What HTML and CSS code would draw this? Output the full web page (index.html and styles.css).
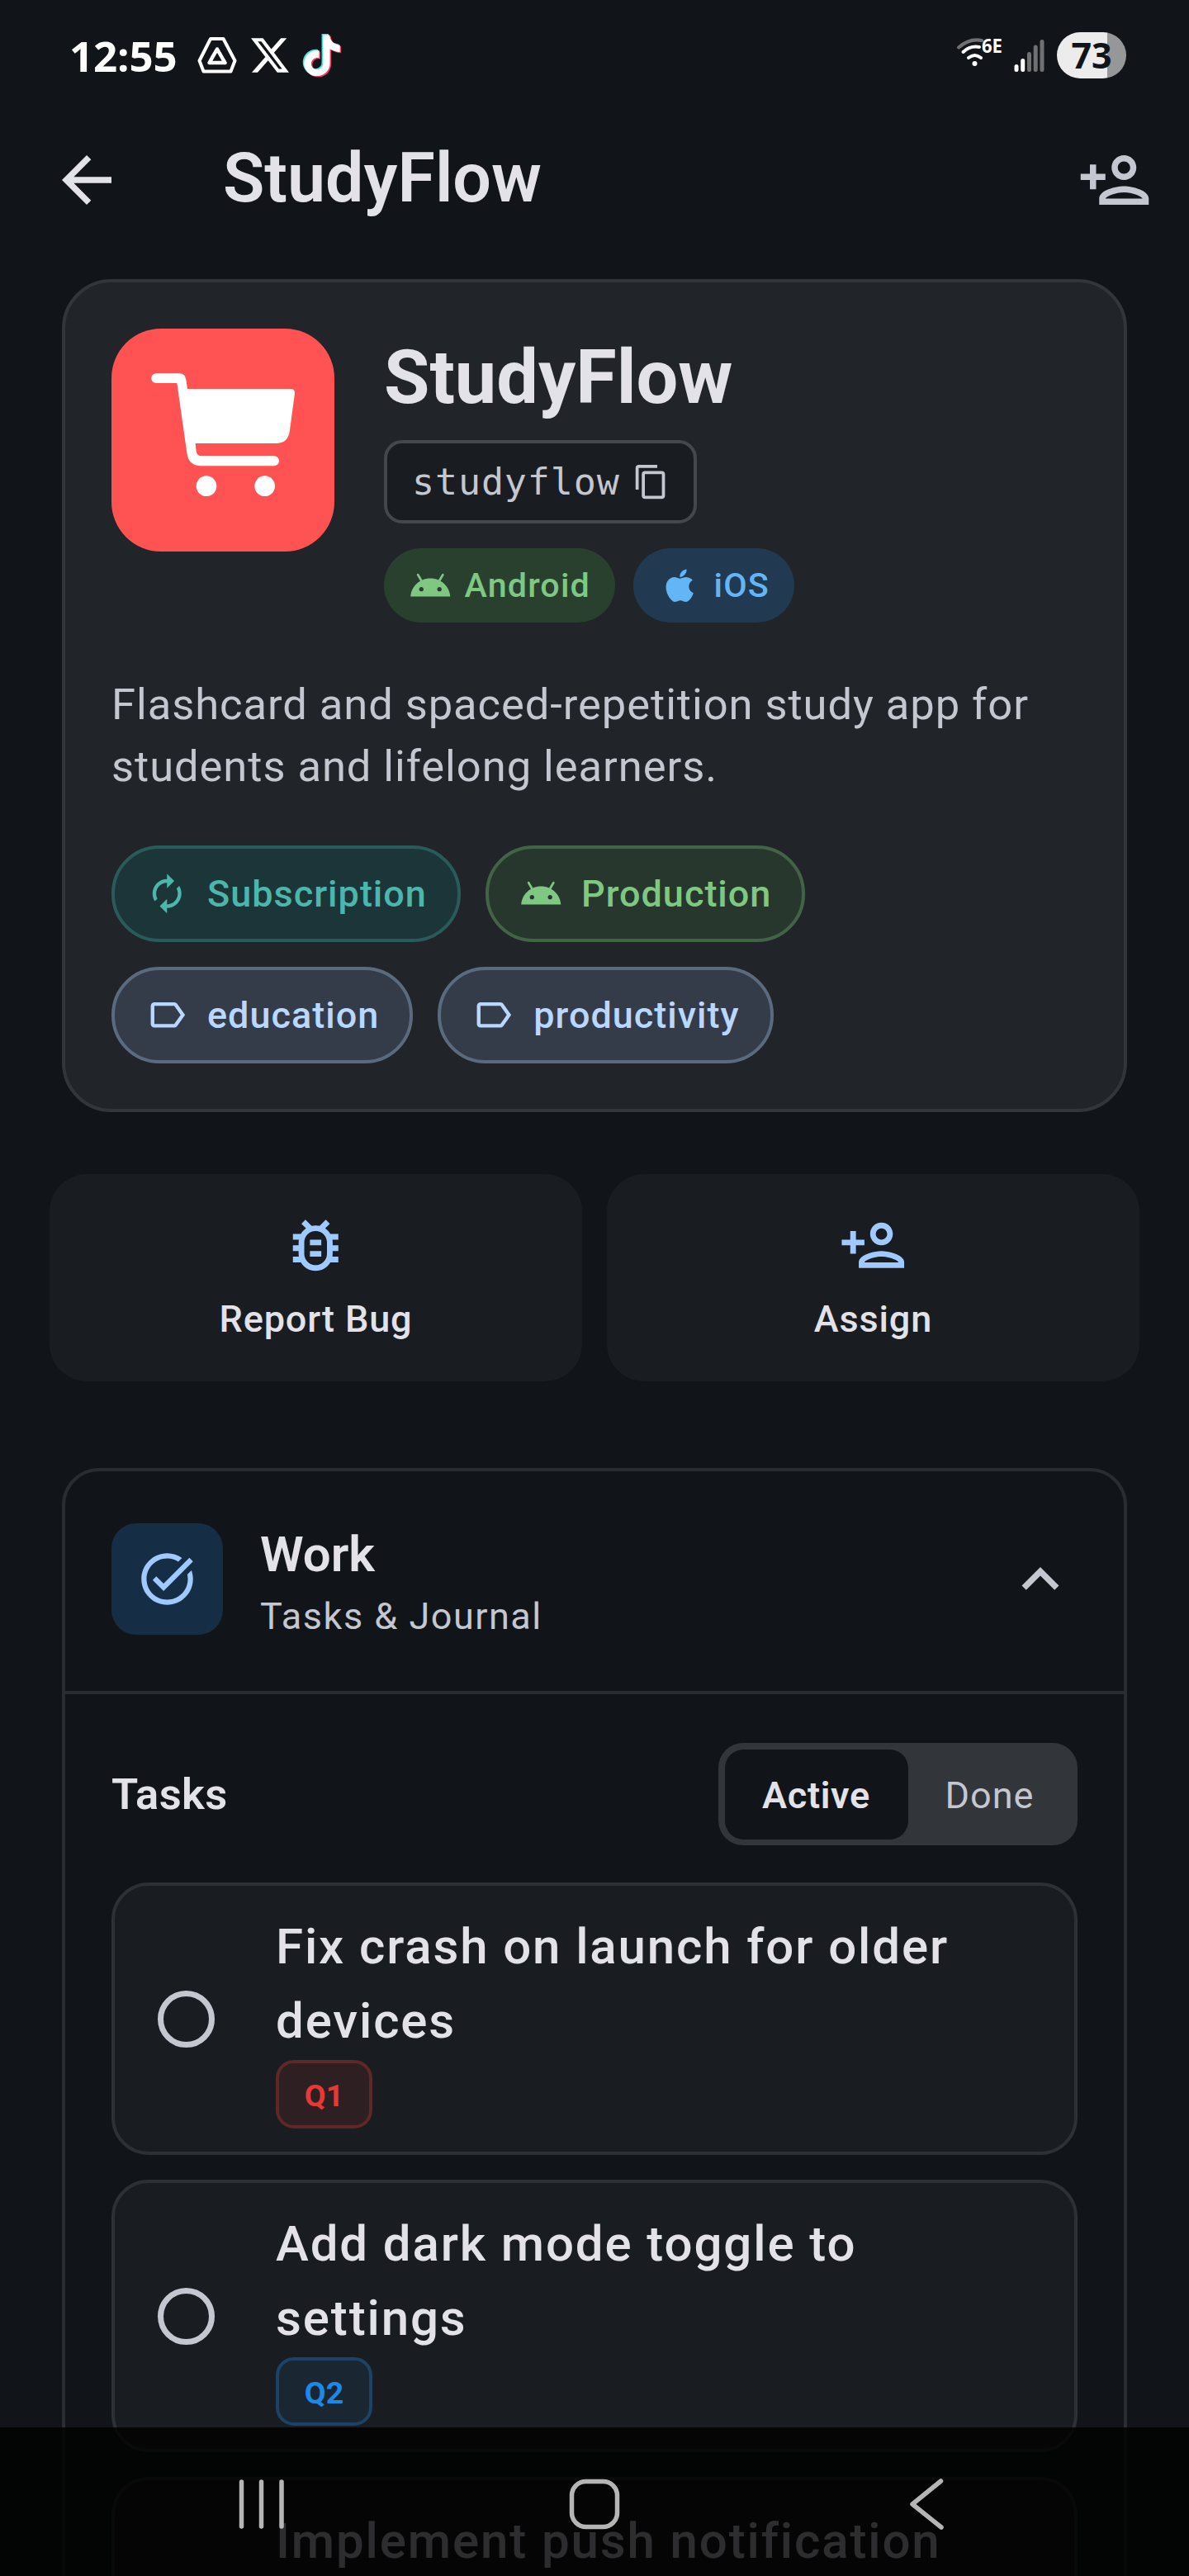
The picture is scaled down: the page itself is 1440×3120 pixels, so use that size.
FILE: index.html
```html
<!DOCTYPE html>
<html lang="en">

<head>
    <meta charset="UTF-8">
    <meta name="viewport" content="width=device-width, initial-scale=1.0">
    <title>StudyFlow</title>
    <link rel="stylesheet" href="styles.css">
</head>

<body>
    <!-- shared icon shapes -->
    <svg class="sprite" width="0" height="0">
        <symbol id="person-add" viewBox="0 0 24 24">
            <path d="M15 12c2.21 0 4-1.79 4-4s-1.79-4-4-4-4 1.79-4 4 1.79 4 4 4zm0-6c1.1 0 2 .9 2 2s-.9 2-2 2-2-.9-2-2 .9-2 2-2zm0 8c-2.67 0-8 1.34-8 4v2h16v-2c0-2.66-5.33-4-8-4zm-6 4c.22-.72 3.31-2 6-2 2.7 0 5.8 1.29 6 2H9zm-3-3v-3h3v-2H6V7H4v3H1v2h3v3h2z"/>
        </symbol>
        <symbol id="android" viewBox="0 0 24 24">
            <path d="M17.6 9.48l1.84-3.18c.16-.31.04-.69-.26-.85-.29-.15-.65-.06-.83.22l-1.88 3.24c-2.86-1.21-6.08-1.21-8.94 0L5.65 5.67c-.19-.29-.58-.38-.87-.2-.28.18-.37.54-.22.83L6.4 9.48C3.3 11.25 1.28 14.44 1 18h22c-.28-3.56-2.3-6.75-5.4-8.52zM7 15.25c-.69 0-1.25-.56-1.25-1.25s.56-1.25 1.25-1.25 1.25.56 1.25 1.25-.56 1.25-1.25 1.25zm10 0c-.69 0-1.25-.56-1.25-1.25s.56-1.25 1.25-1.25 1.25.56 1.25 1.25-.56 1.25-1.25 1.25z"/>
        </symbol>
        <symbol id="label" viewBox="0 0 24 24">
            <path d="M17.63 5.84C17.27 5.33 16.67 5 16 5L5 5.01C3.9 5.01 3 5.9 3 7v10c0 1.1.9 1.99 2 1.99L16 19c.67 0 1.27-.33 1.63-.84L22 12l-4.37-6.16zM16 17H5V7h11l3.55 5L16 17z"/>
        </symbol>
        <symbol id="tiktok" viewBox="0 0 24 24">
            <path d="M12.525.02c1.31-.02 2.61-.01 3.91-.02.08 1.53.63 3.09 1.75 4.17 1.12 1.11 2.7 1.62 4.24 1.79v4.03c-1.44-.05-2.89-.35-4.2-.97-.57-.26-1.1-.59-1.62-.93-.01 2.92.01 5.84-.02 8.75-.08 1.4-.54 2.79-1.35 3.94-1.31 1.92-3.58 3.17-5.91 3.21-1.43.08-2.86-.31-4.08-1.03-2.02-1.19-3.44-3.37-3.65-5.71-.02-.5-.03-1-.01-1.49.18-1.9 1.12-3.72 2.58-4.96 1.66-1.44 3.98-2.13 6.15-1.72.02 1.48-.04 2.96-.04 4.44-.99-.32-2.15-.23-3.02.37-.63.41-1.11 1.04-1.36 1.75-.21.51-.15 1.07-.14 1.61.24 1.64 1.82 3.02 3.5 2.87 1.12-.01 2.19-.66 2.77-1.61.19-.33.4-.67.41-1.06.1-1.79.06-3.57.07-5.36.01-4.03-.01-8.05.02-12.07z"/>
        </symbol>
    </svg>

    <div class="status-bar">
        <span class="time">12:55</span>
        <svg class="drive-icon" viewBox="0 0 48 44">
            <path d="M16 2h15.500L45.500 28.500l-5 13h-33l-5-13z" fill="none" stroke="#fff" stroke-width="4" stroke-linejoin="round"/>
            <path d="M24 14.500L33.500 31h-19z" fill="none" stroke="#fff" stroke-width="4.500" stroke-linejoin="round"/>
        </svg>
        <svg class="x-icon" viewBox="0 0 24 24">
            <path fill="#fff" d="M18.901 1.153h3.680l-8.040 9.190L24 22.846h-7.406l-5.800-7.584-6.638 7.584H.474l8.600-9.830L0 1.154h7.594l5.243 6.932ZM17.610 20.644h2.039L6.486 3.240H4.298Z"/>
        </svg>
        <svg class="tiktok-icon" viewBox="0 0 47 53">
            <use href="#tiktok" x="-2.500" y="0" width="50" height="50" fill="#3de8e4"/>
            <use href="#tiktok" x="0.500" y="2.500" width="50" height="50" fill="#f5365f"/>
            <use href="#tiktok" x="-1" y="1.300" width="50" height="50" fill="#fff"/>
        </svg>
        <svg class="wifi-icon" viewBox="0 -12 58 50">
            <g fill="none" stroke="#fff" stroke-width="4" stroke-linecap="round">
                <path d="M3 12.500Q16 1 31 4" stroke="#6e7072"/>
                <path d="M8.500 18Q17 10 28 12"/>
                <path d="M15 25Q22.500 19 30 25"/>
            </g>
            <circle cx="22.500" cy="32" r="3" fill="#fff"/>
            <text x="31" y="19" class="wifi-label" textLength="25" lengthAdjust="spacingAndGlyphs">6E</text>
        </svg>
        <svg class="signal-icon" viewBox="0 0 37 41">
            <g stroke-width="5" stroke-linecap="round" stroke="#6e7072">
                <path d="M3 33.500v4M10.700 26.500v11" stroke="#fff"/>
                <path d="M18.500 18.500v19M26.200 10v27.500M34 3.500v34"/>
            </g>
        </svg>
        <div class="battery">73</div>
    </div>

    <header class="app-bar">
        <svg class="icon-90" viewBox="0 0 24 24"><path d="M20 11H7.830l5.590-5.590L12 4l-8 8 8 8 1.410-1.410L7.830 13H20v-2z"/></svg>
        <h1>StudyFlow</h1>
        <svg class="icon-90 add-member"><use href="#person-add"/></svg>
    </header>

    <section class="app-card">
        <div class="app-head">
            <svg class="app-icon" viewBox="-45 -66 810 810">
                <path fill="#fff" d="M117 97H202Q223 98 226 119L231 153H607Q622 153 621 169L602 310Q595 349 557 351H260L263 380Q266 397 283 397H546A18 18 0 0 1 546 433H276Q234 430 229 385L193 132H117A17.500 17.500 0 0 1 117 97Z"/>
                <circle cx="300" cy="506" r="37" fill="#fff"/>
                <circle cx="512" cy="506" r="37" fill="#fff"/>
            </svg>
            <div class="app-info">
                <h2>StudyFlow</h2>
                <div class="slug">
                    <span>studyflow</span>
                    <svg viewBox="0 0 24 24"><path d="M16 1H4c-1.100 0-2 .9-2 2v14h2V3h12V1zm3 4H8c-1.100 0-2 .9-2 2v14c0 1.100.9 2 2 2h11c1.100 0 2-.9 2-2V7c0-1.100-.9-2-2-2zm0 16H8V7h11v14z"/></svg>
                </div>
                <div class="platforms">
                    <div class="platform android"><svg><use href="#android"/></svg><span>Android</span></div>
                    <div class="platform ios">
                        <svg viewBox="0 0 24 24"><path d="M17.050 20.280c-.98.95-2.050.8-3.080.35-1.090-.46-2.090-.48-3.240 0-1.440.62-2.200.44-3.060-.35C2.790 15.250 3.510 7.590 9.050 7.310c1.350.07 2.290.74 3.080.8 1.180-.24 2.310-.93 3.570-.84 1.510.12 2.650.72 3.400 1.800-3.120 1.870-2.380 5.980.48 7.130-.57 1.500-1.320 3.020-2.530 4.080zM12.030 7.250C11.880 5.020 13.690 3.180 15.770 3c.29 2.580-2.340 4.500-3.740 4.250z"/></svg>
                        <span>iOS</span>
                    </div>
                </div>
            </div>
        </div>
        <p class="description">Flashcard and spaced-repetition study app for students and lifelong learners.</p>
        <div class="chips">
            <div class="chip subscription">
                <svg viewBox="0 0 24 24"><path d="M12 6v3l4-4-4-4v3c-4.420 0-8 3.580-8 8 0 1.570.46 3.030 1.240 4.260L6.700 14.800c-.45-.83-.7-1.790-.7-2.800 0-3.310 2.690-6 6-6zm6.760 1.740L17.300 9.200c.44.84.7 1.790.7 2.800 0 3.310-2.690 6-6 6v-3l-4 4 4 4v-3c4.420 0 8-3.580 8-8 0-1.570-.46-3.030-1.240-4.260z"/></svg>
                <span>Subscription</span>
            </div>
            <div class="chip production"><svg><use href="#android"/></svg><span>Production</span></div>
            <div class="chip tag"><svg><use href="#label"/></svg><span>education</span></div>
            <div class="chip tag"><svg><use href="#label"/></svg><span>productivity</span></div>
        </div>
    </section>

    <div class="actions">
        <div class="action">
            <svg viewBox="0 0 24 24"><path d="M20 8h-2.810c-.45-.78-1.070-1.450-1.820-1.960L17 4.410 15.590 3l-2.170 2.170C12.960 5.060 12.490 5 12 5s-.96.06-1.410.17L8.410 3 7 4.410l1.620 1.630C7.880 6.550 7.260 7.220 6.810 8H4v2h2.090c-.05.33-.09.66-.09 1v1H4v2h2v1c0 .34.04.67.09 1H4v2h2.810c1.040 1.790 2.970 3 5.190 3s4.150-1.210 5.190-3H20v-2h-2.090c.05-.33.09-.66.09-1v-1h2v-2h-2v-1c0-.34-.04-.67-.09-1H20V8zm-4 4v3c0 2.210-1.790 4-4 4s-4-1.790-4-4v-4c0-2.210 1.790-4 4-4s4 1.790 4 4v1zm-6 2h4v2h-4zm0-4h4v2h-4z"/></svg>
            <span>Report Bug</span>
        </div>
        <div class="action">
            <svg><use href="#person-add"/></svg>
            <span>Assign</span>
        </div>
    </div>

    <section class="work">
        <div class="work-head">
            <div class="work-icon">
                <svg viewBox="0 0 24 24"><path d="M22 5.180L10.590 16.600l-4.240-4.240 1.410-1.410 2.830 2.830 10-10L22 5.180zm-2.210 5.040c.13.57.21 1.170.21 1.780 0 4.420-3.580 8-8 8s-8-3.580-8-8 3.580-8 8-8c1.580 0 3.040.46 4.280 1.250l1.440-1.440C16.100 2.670 14.130 2 12 2 6.480 2 2 6.480 2 12s4.480 10 10 10 10-4.480 10-10c0-1.190-.22-2.330-.6-3.390l-1.610 1.610z"/></svg>
            </div>
            <div class="work-title">
                <h3>Work</h3>
                <p>Tasks &amp; Journal</p>
            </div>
            <svg class="icon-90 chevron" viewBox="0 0 24 24"><path d="M12 8l-6 6 1.410 1.410L12 10.830l4.590 4.580L18 14z"/></svg>
        </div>
        <div class="work-body">
            <div class="tasks-head">
                <h4>Tasks</h4>
                <div class="segmented">
                    <button class="selected">Active</button>
                    <button>Done</button>
                </div>
            </div>
            <div class="task">
                <span class="circle"></span>
                <div class="task-info">
                    <p>Fix crash on launch for older devices</p>
                    <span class="badge q1">Q1</span>
                </div>
            </div>
            <div class="task">
                <span class="circle"></span>
                <div class="task-info">
                    <p>Add dark mode toggle to settings</p>
                    <span class="badge q2">Q2</span>
                </div>
            </div>
            <div class="task task-partial">
                <p>Implement push notification</p>
            </div>
        </div>
    </section>

    <nav class="nav-bar">
        <svg viewBox="0 0 64 64"><path d="M8.500 5v54M32.500 5v54M57 5v54"/></svg>
        <svg viewBox="0 0 64 64"><rect x="4.500" y="4.500" width="55" height="55" rx="17"/></svg>
        <svg viewBox="0 0 64 64"><path d="M48.500 4L14 32l35 28"/></svg>
    </nav>
</body>

</html>
```

FILE: styles.css
```css
* {
    box-sizing: border-box;
}

body {
    position: relative;
    height: 3120px;
    margin: 0;
    overflow: hidden;
    background-color: #111418;
    color: #e2e2e8;
    font-family: Roboto, sans-serif;
}

h1, h2, h3, h4, p {
    margin: 0;
}

svg {
    display: block;
    flex: none;
    fill: currentColor;
}

.sprite {
    position: absolute;
}

.icon-90 {
    width: 90px;
    height: 90px;
}

/* status bar */
.status-bar {
    display: flex;
    align-items: center;
    height: 128px;
    padding: 6px 76px 0 84px;
    color: #fff;
}

.time {
    width: 155px;
    font: 700 51px/60px "Open Sans", sans-serif;
    letter-spacing: -0.1px;
}

.drive-icon {
    width: 48px;
    height: 44px;
}

.x-icon {
    width: 46px;
    height: 46px;
    margin-left: 17px;
}

.tiktok-icon {
    width: 47px;
    height: 53px;
    margin-left: 16px;
}

.wifi-icon {
    width: 58px;
    height: 50px;
    margin: 0 12px 18px auto;
}

.wifi-label {
    font: 700 23px "Open Sans", sans-serif;
    fill: #fff;
}

.signal-icon {
    width: 37px;
    height: 41px;
}

.battery {
    width: 84px;
    height: 56px;
    margin-left: 15px;
    border-radius: 28px;
    background: linear-gradient(to right, #ececec 61px, #969799 61px);
    color: #111418;
    font: 700 43px/56px "Open Sans", sans-serif;
    text-align: center;
}

/* app bar */
.app-bar {
    display: flex;
    align-items: center;
    height: 180px;
    padding: 0 45px 0 60px;
}

.app-bar h1 {
    flex: 1;
    margin-left: 120px;
    padding-bottom: 6px;
    font-size: 82.5px;
    font-weight: 600;
    line-height: 105px;
}

.add-member {
    color: #c4c6d0;
}

/* app card */
.app-card {
    height: 1009px;
    margin: 30px 75px 0;
    padding: 56px;
    border: 4px solid #323539;
    border-radius: 60px;
    background-color: #212429;
}

.app-head {
    display: flex;
    gap: 60px;
}

.app-icon {
    width: 270px;
    height: 270px;
    border-radius: 60px;
    background-color: #ff5353;
}

.app-info h2 {
    font-size: 90px;
    font-weight: 700;
    line-height: 120px;
}

.slug {
    display: flex;
    align-items: center;
    gap: 15px;
    width: 379px;
    height: 101px;
    margin-top: 15px;
    padding-left: 30px;
    border: 4px solid #44474c;
    border-radius: 22px;
    background-color: #191c20;
    color: #c4c6d0;
    font: 45px "DejaVu Sans Mono", monospace;
    letter-spacing: 0.87px;
}

.slug svg {
    width: 45px;
    height: 45px;
}

.platforms {
    display: flex;
    gap: 22px;
    margin-top: 30px;
}

.platform {
    display: flex;
    align-items: center;
    gap: 15px;
    height: 90px;
    padding: 0 30px;
    border-radius: 45px;
    font-size: 41.25px;
    font-weight: 500;
    letter-spacing: 1.15px;
}

.platform svg {
    width: 52.5px;
    height: 52.5px;
}

.android {
    background-color: #29402f;
    color: #81c784;
}

.ios {
    background-color: #213a52;
    color: #64b5f6;
}

.description {
    margin-top: 62px;
    color: #c4c6d0;
    font-size: 52.5px;
    line-height: 75px;
    letter-spacing: 0.94px;
}

.chips {
    display: flex;
    flex-wrap: wrap;
    gap: 30px;
    margin-top: 58px;
}

.chip {
    display: flex;
    align-items: center;
    gap: 22.5px;
    height: 117px;
    padding: 0 37px;
    border: 4px solid;
    border-radius: 58px;
    font-size: 45px;
    font-weight: 500;
    letter-spacing: 1px;
}

.chip svg {
    width: 52.5px;
    height: 52.5px;
}

.subscription {
    border-color: #2b5a5a;
    background-color: #1c3538;
    color: #4db6ac;
}

.production {
    border-color: #436347;
    background-color: #27372e;
    color: #81c784;
}

.tag {
    border-color: #5a6b80;
    background-color: #343b49;
    color: #b9d7ff;
}

/* quick actions */
.actions {
    display: grid;
    grid-template-columns: 1fr 1fr;
    gap: 30px;
    margin: 75px 60px 0;
}

.action {
    display: flex;
    flex-direction: column;
    align-items: center;
    gap: 18px;
    height: 251px;
    padding-top: 45px;
    border-radius: 45px;
    background-color: #191c20;
    font-size: 45px;
    font-weight: 500;
    line-height: 60px;
    letter-spacing: 0.85px;
}

.action svg {
    width: 82.5px;
    height: 82.5px;
    color: #a0caff;
}

/* work section, runs off the bottom of the screen */
.work {
    height: 1342px;
    margin: 105px 75px 0;
    border: 4px solid #292c30;
    border-bottom: none;
    border-radius: 45px 45px 0 0;
}

.work-head {
    display: flex;
    align-items: center;
    height: 270px;
    padding: 0 56px 5px;
    border-bottom: 4px solid #292c30;
}

.work-icon {
    display: flex;
    align-items: center;
    justify-content: center;
    width: 135px;
    height: 135px;
    border-radius: 30px;
    background-color: #162e45;
    color: #a0caff;
}

.work-icon svg {
    width: 75px;
    height: 75px;
}

.work-title {
    flex: 1;
    margin-left: 45px;
}

.work-title h3 {
    font-size: 60px;
    font-weight: 600;
    line-height: 90px;
}

.work-title p {
    color: #c4c6d0;
    font-size: 45px;
    line-height: 60px;
    letter-spacing: 1.5px;
}

.chevron {
    color: #c4c6d0;
}

.work-body {
    padding: 59px 56px 0;
}

.tasks-head {
    display: flex;
    align-items: center;
    justify-content: space-between;
    margin-bottom: 45px;
}

.tasks-head h4 {
    font-size: 52.5px;
    font-weight: 600;
    letter-spacing: 0.4px;
}

.segmented {
    display: flex;
    width: 435px;
    height: 124px;
    padding: 7.5px;
    border-radius: 30px;
    background-color: #323539;
}

.segmented button {
    flex: 1 1 auto;
    padding: 2px 0 0;
    border: none;
    border-radius: 22.5px;
    background: none;
    color: #c4c6d0;
    font: 400 45px Roboto, sans-serif;
    letter-spacing: 1px;
}

.segmented .selected {
    flex: none;
    width: 222px;
    background-color: #111418;
    color: #e2e2e8;
    font-weight: 600;
    letter-spacing: 0.7px;
}

.task {
    display: flex;
    align-items: center;
    height: 330px;
    margin-bottom: 30px;
    padding: 0 52px;
    border: 4px solid #2d3034;
    border-radius: 45px;
    background-color: #191c20;
}

.task p {
    font-size: 60px;
    font-weight: 500;
    line-height: 90px;
    letter-spacing: 1.88px;
}

.task-partial {
    height: 120px;
    margin-bottom: 0;
    padding: 32px 52px 0 195px;
    border-bottom: none;
    border-radius: 45px 45px 0 0;
}

.task-partial p {
    line-height: 84px;
}

.circle {
    flex: none;
    width: 69px;
    height: 69px;
    border: 7px solid #c4c6d0;
    border-radius: 50%;
}

.task-info {
    margin-left: 74px;
}

.badge {
    display: block;
    width: 117px;
    height: 83px;
    margin-top: 2px;
    border: 4px solid;
    border-radius: 22px;
    font-size: 37.5px;
    font-weight: 700;
    line-height: 78px;
    text-align: center;
}

.q1 {
    border-color: #5e2728;
    background-color: #2e1f22;
    color: #e53935;
}

.q2 {
    border-color: #1c4265;
    background-color: #1a2733;
    color: #1e88e5;
}

/* system navigation, drawn over the scrolled list */
.nav-bar {
    position: absolute;
    right: 0;
    bottom: 0;
    left: 0;
    display: flex;
    justify-content: space-between;
    height: 180px;
    padding: 61px 285px 0 284px;
    background-color: rgba(0, 0, 0, 0.8);
}

.nav-bar svg {
    width: 64px;
    height: 64px;
    fill: none;
    stroke: #b5b5b5;
    stroke-width: 5.5;
    stroke-linecap: round;
    stroke-linejoin: round;
}
```
